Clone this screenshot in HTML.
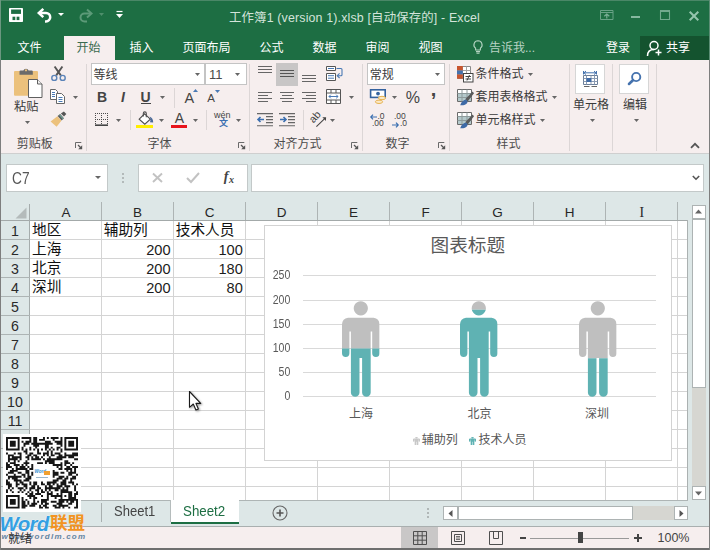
<!DOCTYPE html>
<html lang="zh-CN"><head><meta charset="utf-8"><title>Excel</title>
<style>
html,body{margin:0;padding:0;background:#fff;font-family:"Liberation Sans","Noto Sans CJK SC",sans-serif;}
body{width:710px;height:550px;overflow:hidden;position:relative;font-family:"Liberation Sans","Noto Sans CJK SC",sans-serif;}
#app{position:absolute;left:0;top:0;width:710px;height:550px;overflow:hidden;background:#dde7e7;}
.a{position:absolute;display:block;overflow:visible;}
.t{position:absolute;white-space:nowrap;font-family:"Liberation Sans","Noto Sans CJK SC",sans-serif;}
</style></head>
<body>
<div id="app">
<div class="a" style="left:0px;top:0px;width:710px;height:60px;background:#1d6e43;"></div>
<div class="a" style="left:0px;top:0px;width:710px;height:1px;background:#4a8767;"></div>
<svg class="a" viewBox="0 0 14 14" style="left:9px;top:8px;width:14px;height:14px;"><rect x="0" y="0" width="14" height="14" rx="0.8" fill="#fff"/><rect x="2.1" y="1.5" width="9.9" height="4.4" fill="#1d6e43"/><rect x="3.5" y="8.7" width="2.8" height="3.4" fill="#1d6e43"/><rect x="7.6" y="8.7" width="2.8" height="3.4" fill="#1d6e43"/></svg>
<svg class="a" viewBox="0 0 15 15" style="left:37px;top:8px;width:15px;height:15px;"><path d="M2.5 5H9A4.2 4.2 0 0 1 9 13.4H8" fill="none" stroke="#fff" stroke-width="2.5"/><path d="M6.3 0.8L1.8 5L6.3 9.2" fill="none" stroke="#fff" stroke-width="2.5"/></svg>
<svg class="a" viewBox="0 0 6 3" style="left:57.7px;top:13px;width:6px;height:3px;"><path d="M0 0H6 L3 3Z" fill="#fff"/></svg>
<svg class="a" viewBox="0 0 15 15" style="left:78px;top:8px;width:15px;height:15px;"><path d="M13 5.5H6.5A4 4 0 0 0 6.5 13.5H9" fill="none" stroke="#5c9a78" stroke-width="2"/><path d="M9 1.5L13.5 5.5L9 9.5" fill="none" stroke="#5c9a78" stroke-width="2"/></svg>
<svg class="a" viewBox="0 0 5 3" style="left:98.5px;top:13px;width:5px;height:3px;"><path d="M0 0H5 L2.5 3Z" fill="#4f8f6c"/></svg>
<svg class="a" viewBox="0 0 7 8" style="left:116px;top:11px;width:7px;height:8px;"><path d="M0.5 0.5H6.5" stroke="#fff" stroke-width="1.2"/><path d="M0 3H7L3.5 7Z" fill="#fff"/></svg>
<div class="t" style="left:229px;top:11.5px;font-size:12.4px;line-height:12.4px;color:#d3e4da;letter-spacing:0.16px;">工作簿1 (version 1).xlsb [自动保存的] - Excel</div>
<svg class="a" viewBox="0 0 14 10" style="left:600px;top:10px;width:14px;height:10px;"><path d="M0.5 0.5H13V9.5H0.5Z M0.5 2.5H13" fill="none" stroke="#69a287" stroke-width="1"/><path d="M6.8 4V8.5M4.3 6.3L6.8 4L9.3 6.3" fill="none" stroke="#7aae95" stroke-width="1.2"/></svg>
<div class="a" style="left:631px;top:16px;width:9.3px;height:2px;background:#86b89f;"></div>
<svg class="a" viewBox="0 0 10 10" style="left:660px;top:10px;width:10px;height:10px;"><path d="M0.5 1H9.5V9.5H0.5Z" fill="none" stroke="#72aa8e" stroke-width="1.1"/><path d="M0 1H10" stroke="#72aa8e" stroke-width="2"/></svg>
<svg class="a" viewBox="0 0 10 10" style="left:689px;top:11px;width:10px;height:10px;"><path d="M0.7 0.7L9.3 9.3M9.3 0.7L0.7 9.3" stroke="#95c4ad" stroke-width="2"/></svg>
<div class="a" style="left:64px;top:36px;width:51px;height:25px;background:#f6eeee;"></div>
<div class="t" style="left:17.5px;top:41.5px;font-size:12px;line-height:12px;color:#fff;">文件</div>
<div class="t" style="left:76.5px;top:41.5px;font-size:12px;line-height:12px;color:#3a6a50;">开始</div>
<div class="t" style="left:129.5px;top:41.5px;font-size:12px;line-height:12px;color:#fff;">插入</div>
<div class="t" style="left:182.5px;top:41.5px;font-size:12px;line-height:12px;color:#fff;">页面布局</div>
<div class="t" style="left:259.5px;top:41.5px;font-size:12px;line-height:12px;color:#fff;">公式</div>
<div class="t" style="left:312.5px;top:41.5px;font-size:12px;line-height:12px;color:#fff;">数据</div>
<div class="t" style="left:365.5px;top:41.5px;font-size:12px;line-height:12px;color:#fff;">审阅</div>
<div class="t" style="left:418.5px;top:41.5px;font-size:12px;line-height:12px;color:#fff;">视图</div>
<svg class="a" viewBox="0 0 10 14" style="left:472.5px;top:40px;width:10px;height:14px;"><path d="M5 0.8A4.1 4.1 0 0 0 2.6 8.2V10H7.4V8.2A4.1 4.1 0 0 0 5 0.8Z M3 11.6H7 M3.5 13.2H6.5" fill="none" stroke="#b4d4c2" stroke-width="1.1"/></svg>
<div class="t" style="left:489px;top:41.5px;font-size:12px;line-height:12px;color:#b7d3c3;">告诉我...</div>
<div class="t" style="left:606px;top:41.5px;font-size:12px;line-height:12px;color:#fff;">登录</div>
<div class="a" style="left:640px;top:36px;width:69px;height:24px;background:#14532f;"></div>
<svg class="a" viewBox="0 0 17 17" style="left:646px;top:40px;width:17px;height:17px;"><circle cx="8" cy="5.5" r="4" fill="none" stroke="#fff" stroke-width="1.5"/><path d="M1.5 16C1.5 11 5 9.6 8 9.6" fill="none" stroke="#fff" stroke-width="1.5"/><path d="M12.5 9.5V15.5M9.5 12.5H15.5" stroke="#fff" stroke-width="1.5"/></svg>
<div class="t" style="left:666px;top:41.5px;font-size:12px;line-height:12px;color:#fff;">共享</div>
<div class="a" style="left:1px;top:60px;width:708px;height:93px;background:#f6eeee;"></div>
<div class="a" style="left:0px;top:153px;width:710px;height:1px;background:#cfcfcf;"></div>
<div class="a" style="left:86px;top:64px;width:1px;height:87px;background:#dcd6d6;"></div>
<div class="a" style="left:249px;top:64px;width:1px;height:87px;background:#dcd6d6;"></div>
<div class="a" style="left:361.5px;top:64px;width:1px;height:87px;background:#dcd6d6;"></div>
<div class="a" style="left:449px;top:64px;width:1px;height:87px;background:#dcd6d6;"></div>
<div class="a" style="left:569px;top:64px;width:1px;height:87px;background:#dcd6d6;"></div>
<div class="a" style="left:612px;top:64px;width:1px;height:87px;background:#dcd6d6;"></div>
<div class="a" style="left:656px;top:64px;width:1px;height:87px;background:#dcd6d6;"></div>
<div class="t" style="left:16.7px;top:137.5px;font-size:12px;line-height:12px;color:#4c4c4c;">剪贴板</div>
<div class="t" style="left:147.6px;top:137.5px;font-size:12px;line-height:12px;color:#4c4c4c;">字体</div>
<div class="t" style="left:273.6px;top:137.5px;font-size:12px;line-height:12px;color:#4c4c4c;">对齐方式</div>
<div class="t" style="left:385.6px;top:137.5px;font-size:12px;line-height:12px;color:#4c4c4c;">数字</div>
<div class="t" style="left:496.6px;top:137.5px;font-size:12px;line-height:12px;color:#4c4c4c;">样式</div>
<svg class="a" viewBox="0 0 8 8" style="left:74.7px;top:142px;width:8px;height:8px;"><path d="M0.5 6V0.5H6.3" fill="none" stroke="#6a6a6a" stroke-width="1"/><path d="M3 3L6 6" fill="none" stroke="#555" stroke-width="1.2"/><path d="M7.2 3.2V7.2H3.2Z" fill="#555"/></svg>
<svg class="a" viewBox="0 0 8 8" style="left:237.7px;top:142px;width:8px;height:8px;"><path d="M0.5 6V0.5H6.3" fill="none" stroke="#6a6a6a" stroke-width="1"/><path d="M3 3L6 6" fill="none" stroke="#555" stroke-width="1.2"/><path d="M7.2 3.2V7.2H3.2Z" fill="#555"/></svg>
<svg class="a" viewBox="0 0 8 8" style="left:350.7px;top:142px;width:8px;height:8px;"><path d="M0.5 6V0.5H6.3" fill="none" stroke="#6a6a6a" stroke-width="1"/><path d="M3 3L6 6" fill="none" stroke="#555" stroke-width="1.2"/><path d="M7.2 3.2V7.2H3.2Z" fill="#555"/></svg>
<svg class="a" viewBox="0 0 8 8" style="left:437.7px;top:142px;width:8px;height:8px;"><path d="M0.5 6V0.5H6.3" fill="none" stroke="#6a6a6a" stroke-width="1"/><path d="M3 3L6 6" fill="none" stroke="#555" stroke-width="1.2"/><path d="M7.2 3.2V7.2H3.2Z" fill="#555"/></svg>
<svg class="a" viewBox="0 0 29 31" style="left:14px;top:67px;width:29px;height:31px;"><rect x="0" y="4" width="24" height="24.8" rx="1" fill="#ecc17c"/><path d="M5.5 7.8V4.6A1 1 0 0 1 6.5 3.6H9.4A2.7 2.7 0 0 1 14.6 3.6H17.8A1 1 0 0 1 18.8 4.6V7.8Z" fill="#6a6a6a"/><circle cx="12" cy="3.3" r="1.1" fill="#ecc17c"/><path d="M14.5 12.5H23.5L28 17V30.5H14.5Z" fill="#fff" stroke="#5f5f5f" stroke-width="1"/><path d="M23.5 12.5V17H28" fill="#f1f1f1" stroke="#5f5f5f" stroke-width="1"/></svg>
<div class="t" style="left:14px;top:100.5px;font-size:12.2px;line-height:12.2px;color:#3a3a3a;">粘贴</div>
<svg class="a" viewBox="0 0 5 3" style="left:25px;top:121px;width:5px;height:3px;"><path d="M0 0H5 L2.5 3Z" fill="#666"/></svg>
<svg class="a" viewBox="0 0 17 17" style="left:50px;top:65px;width:17px;height:17px;"><path d="M4.6 1.5L10.8 10.4M12.4 1.5L6.2 10.4" stroke="#555" stroke-width="1.9" fill="none"/><circle cx="4.3" cy="12.9" r="2.5" fill="none" stroke="#5a83b8" stroke-width="1.4"/><circle cx="12.7" cy="12.9" r="2.5" fill="none" stroke="#5a83b8" stroke-width="1.4"/></svg>
<svg class="a" viewBox="0 0 17 17" style="left:49px;top:88px;width:17px;height:17px;"><path d="M1.5 1.5H6.5L8.5 3.5V11.5H1.5Z" fill="#fff" stroke="#666" stroke-width="1"/><path d="M7.5 5.5H12.5L15.5 8.5V15.5H7.5Z" fill="#fff" stroke="#666" stroke-width="1"/><path d="M3 4.5H6M3 6.5H6M3 8.5H6M9.5 9.5H13.5M9.5 11.5H13.5M9.5 13.5H13.5" stroke="#4a7ab5" stroke-width="1"/></svg>
<svg class="a" viewBox="0 0 5 3" style="left:73px;top:96px;width:5px;height:3px;"><path d="M0 0H5 L2.5 3Z" fill="#666"/></svg>
<svg class="a" viewBox="0 0 17 17" style="left:50px;top:111px;width:17px;height:17px;"><path d="M0.6 10.4L7.4 5.2L11.4 9.8L6.6 15.8Z" fill="#ecc17c"/><path d="M7.6 4.9L10.2 2.9L14 7.2L11.6 9.5Z" fill="#5c5c5c"/><path d="M9 3.9L9.9 3.2L13.7 7.5L12.9 8.3Z" fill="#6fa79b"/><path d="M10.9 2.4L13.9 0.4L16.3 2.9L14 5.6Z" fill="#555"/></svg>
<div class="a" style="left:91px;top:63.4px;width:113.5px;height:22px;background:#fff;border:1px solid #c4c4c4;box-sizing:border-box;"></div>
<div class="a" style="left:205px;top:63.4px;width:41.5px;height:22px;background:#fff;border:1px solid #c4c4c4;box-sizing:border-box;"></div>
<div class="t" style="left:93.4px;top:68.8px;font-size:12px;line-height:12px;color:#3a3a3a;">等线</div>
<svg class="a" viewBox="0 0 5 3" style="left:195px;top:73px;width:5px;height:3px;"><path d="M0 0H5 L2.5 3Z" fill="#666"/></svg>
<div class="t" style="left:209px;top:68.3px;font-size:13px;line-height:13px;color:#4a4a4a;">11</div>
<svg class="a" viewBox="0 0 5 3" style="left:234.5px;top:73px;width:5px;height:3px;"><path d="M0 0H5 L2.5 3Z" fill="#666"/></svg>
<div class="t" style="left:97px;top:90px;font-size:14px;line-height:14px;color:#444;font-weight:bold;">B</div>
<div class="t" style="left:121px;top:90px;font-size:14px;line-height:14px;color:#444;font-weight:bold;font-style:italic;">I</div>
<div class="t" style="left:140.5px;top:90px;font-size:14px;line-height:14px;color:#444;font-weight:bold;">U</div>
<div class="a" style="left:140.5px;top:103px;width:10px;height:1.3px;background:#444;"></div>
<svg class="a" viewBox="0 0 5 3" style="left:160px;top:96px;width:5px;height:3px;"><path d="M0 0H5 L2.5 3Z" fill="#666"/></svg>
<div class="a" style="left:173.5px;top:88px;width:1px;height:20px;background:#dcd6d6;"></div>
<div class="t" style="left:184.5px;top:90.5px;font-size:14.5px;line-height:14.5px;color:#444;">A</div>
<svg class="a" viewBox="0 0 5 3" style="left:192.5px;top:89px;width:5px;height:3px;"><path d="M0 3H5L2.5 0Z" fill="#4a7ab5"/></svg>
<div class="t" style="left:207.3px;top:93.2px;font-size:11.5px;line-height:11.5px;color:#444;">A</div>
<svg class="a" viewBox="0 0 5 3" style="left:215px;top:90px;width:5px;height:3px;"><path d="M0 0H5L2.5 3Z" fill="#4a7ab5"/></svg>
<svg class="a" viewBox="0 0 13 13" style="left:95px;top:113px;width:13px;height:13px;"><path d="M0 0.5H13M0 6.5H13M0.5 0V11M6.5 0V11M12.5 0V11" fill="none" stroke="#4a4a4a" stroke-width="1" stroke-dasharray="1 1"/><path d="M0 12.2H13" stroke="#444" stroke-width="1.6"/></svg>
<svg class="a" viewBox="0 0 5 3" style="left:116px;top:119px;width:5px;height:3px;"><path d="M0 0H5 L2.5 3Z" fill="#666"/></svg>
<div class="a" style="left:130px;top:110px;width:1px;height:20px;background:#dcd6d6;"></div>
<svg class="a" viewBox="0 0 17 14" style="left:137px;top:111px;width:17px;height:14px;"><path d="M2.2 8.2L7.6 2.8L13.3 8.2L7.8 13.2Z" fill="#fff" stroke="#4f4f4f" stroke-width="1.1"/><path d="M6.3 5.5V2.4A1.5 1.5 0 0 1 9.3 2.4V6.2" fill="none" stroke="#4f4f4f" stroke-width="1.1"/><path d="M12.6 5.6C15 6.6 16.3 8.8 16.2 11.4L13 11.3C13.8 9.6 13.6 7.6 12.6 5.6Z" fill="#4a6a9a"/></svg>
<div class="a" style="left:136px;top:124.5px;width:17px;height:3.5px;background:#ffee00;"></div>
<svg class="a" viewBox="0 0 5 3" style="left:158.5px;top:119px;width:5px;height:3px;"><path d="M0 0H5 L2.5 3Z" fill="#666"/></svg>
<div class="t" style="left:174.7px;top:111.3px;font-size:14px;line-height:14px;color:#444;">A</div>
<div class="a" style="left:171px;top:124.5px;width:16px;height:3.5px;background:#e8141c;"></div>
<svg class="a" viewBox="0 0 5 3" style="left:192.5px;top:119px;width:5px;height:3px;"><path d="M0 0H5 L2.5 3Z" fill="#666"/></svg>
<div class="a" style="left:206px;top:110px;width:1px;height:20px;background:#dcd6d6;"></div>
<div class="t" style="left:214px;top:110.5px;font-size:9px;line-height:9px;color:#444;">wén</div>
<div class="t" style="left:219px;top:119px;font-size:9px;line-height:9px;color:#3b6fb0;font-weight:bold;">文</div>
<svg class="a" viewBox="0 0 5 3" style="left:236px;top:119px;width:5px;height:3px;"><path d="M0 0H5 L2.5 3Z" fill="#666"/></svg>
<svg class="a" viewBox="0 0 16 16" style="left:258px;top:66px;width:16px;height:16px;"><path d="M0 0.5H14M0 3.5H14M0 6.5H14" stroke="#666" stroke-width="1"/></svg>
<div class="a" style="left:276px;top:63px;width:22px;height:22.5px;background:#c8c6c6;"></div>
<svg class="a" viewBox="0 0 16 16" style="left:280px;top:70px;width:16px;height:16px;"><path d="M0 0.5H14M0 3.5H14M0 6.5H14" stroke="#555" stroke-width="1"/></svg>
<svg class="a" viewBox="0 0 16 16" style="left:302px;top:75px;width:16px;height:16px;"><path d="M0 0.5H14M0 3.5H14M0 6.5H14" stroke="#666" stroke-width="1"/></svg>
<svg class="a" viewBox="0 0 18 17" style="left:326px;top:65px;width:18px;height:17px;"><path d="M0.5 1.5H9.5V5.5H0.5Z M0.5 8.5H9.5V15.5H0.5Z" fill="#fff" stroke="#555" stroke-width="1"/><path d="M2 3.5H8M2 10.7H8M2 13.2H8" stroke="#4a7ab5" stroke-width="1"/><path d="M10.5 3.5H15A1 1 0 0 1 16 4.5V9.7A1 1 0 0 1 15 10.7H11.5" fill="none" stroke="#4a7ab5" stroke-width="1.1"/><path d="M13.6 8.4L11.2 10.7L13.6 13" fill="none" stroke="#4a7ab5" stroke-width="1.1"/></svg>
<svg class="a" viewBox="0 0 16 16" style="left:258px;top:92px;width:16px;height:16px;"><path d="M0 0.5H14M0 3.5H10M0 6.5H14M0 9.5H10" stroke="#666" stroke-width="1"/></svg>
<svg class="a" viewBox="0 0 16 16" style="left:280px;top:92px;width:16px;height:16px;"><path d="M0 0.5H14M2 3.5H12M0 6.5H14M2 9.5H12" stroke="#666" stroke-width="1"/></svg>
<svg class="a" viewBox="0 0 16 16" style="left:302px;top:92px;width:16px;height:16px;"><path d="M0 0.5H14M4 3.5H14M0 6.5H14M4 9.5H14" stroke="#666" stroke-width="1"/></svg>
<svg class="a" viewBox="0 0 16 16" style="left:326px;top:89px;width:16px;height:16px;"><path d="M0.5 0.5H14.5V14.5H0.5Z" fill="#fff" stroke="#555" stroke-width="1"/><path d="M0.5 4H14.5M0.5 11H14.5M5 0.5V4M10 0.5V4M5 11V14.5M10 11V14.5" stroke="#555" stroke-width="1" fill="none"/><path d="M3 7.5H12M4.8 5.7L3 7.5L4.8 9.3M10.2 5.7L12 7.5L10.2 9.3" stroke="#4a7ab5" stroke-width="1" fill="none"/></svg>
<svg class="a" viewBox="0 0 5 3" style="left:348.5px;top:96px;width:5px;height:3px;"><path d="M0 0H5 L2.5 3Z" fill="#666"/></svg>
<svg class="a" viewBox="0 0 17 14" style="left:257px;top:113px;width:17px;height:14px;"><path d="M0 0.6H16M9 3.6H16M9 6.6H16M9 9.6H16M0 12.8H16" stroke="#666" stroke-width="1.1"/><path d="M1 6.5H7M3.5 4L1 6.5L3.5 9" stroke="#3b6fb0" stroke-width="1.6" fill="none"/></svg>
<svg class="a" viewBox="0 0 17 14" style="left:279px;top:113px;width:17px;height:14px;"><path d="M0 0.6H16M9 3.6H16M9 6.6H16M9 9.6H16M0 12.8H16" stroke="#666" stroke-width="1.1"/><path d="M1 6.5H7M4.5 4L7 6.5L4.5 9" stroke="#3b6fb0" stroke-width="1.6" fill="none"/></svg>
<div class="a" style="left:302.5px;top:110px;width:1px;height:20px;background:#dcd6d6;"></div>
<svg class="a" viewBox="0 0 18 18" style="left:309px;top:111px;width:18px;height:18px;"><text transform="translate(4.6,12.6) rotate(-48)" font-family="'Liberation Sans',sans-serif" font-size="10.5" fill="#3f3f3f">ab</text><path d="M7.4 15.6L16.2 7.2" stroke="#444" stroke-width="1.1" fill="none"/><path d="M13.4 6.3L17.1 6.2L16.9 9.9Z" fill="#444"/></svg>
<svg class="a" viewBox="0 0 5 3" style="left:330px;top:119px;width:5px;height:3px;"><path d="M0 0H5 L2.5 3Z" fill="#666"/></svg>
<div class="a" style="left:367px;top:63.4px;width:78.3px;height:22px;background:#fff;border:1px solid #c4c4c4;box-sizing:border-box;"></div>
<div class="t" style="left:369.7px;top:68.6px;font-size:12px;line-height:12px;color:#3a3a3a;">常规</div>
<svg class="a" viewBox="0 0 5 3" style="left:434.5px;top:73px;width:5px;height:3px;"><path d="M0 0H5 L2.5 3Z" fill="#666"/></svg>
<svg class="a" viewBox="0 0 18 17" style="left:369px;top:88px;width:18px;height:17px;"><rect x="1.6" y="1.8" width="14.6" height="7.6" fill="#fff" stroke="#33629f" stroke-width="1.6"/><circle cx="9" cy="5.6" r="1.9" fill="#33629f"/><ellipse cx="13" cy="10" rx="3.6" ry="1.7" fill="#fbe9c6" stroke="#e7b352" stroke-width="1"/><ellipse cx="10" cy="13.8" rx="3.6" ry="1.7" fill="#fbe9c6" stroke="#e7b352" stroke-width="1"/></svg>
<svg class="a" viewBox="0 0 5 3" style="left:392px;top:96px;width:5px;height:3px;"><path d="M0 0H5 L2.5 3Z" fill="#666"/></svg>
<div class="t" style="left:405.8px;top:89.8px;font-size:16px;line-height:16px;color:#444;">%</div>
<div class="t" style="left:430.8px;top:79.3px;font-size:20px;line-height:20px;color:#444;font-weight:bold;">,</div>
<div class="t" style="left:377.5px;top:111.5px;font-size:8.5px;line-height:8.5px;color:#444;">.0</div>
<div class="t" style="left:372px;top:119px;font-size:8.5px;line-height:8.5px;color:#444;">.00</div>
<svg class="a" viewBox="0 0 7 6" style="left:370px;top:114px;width:7px;height:6px;"><path d="M0.8 3H7M3 0.7L0.8 3L3 5.3" stroke="#3b6fb0" stroke-width="1.2" fill="none"/></svg>
<div class="t" style="left:394px;top:111.5px;font-size:8.5px;line-height:8.5px;color:#444;">.00</div>
<div class="t" style="left:400px;top:119px;font-size:8.5px;line-height:8.5px;color:#444;">.0</div>
<svg class="a" viewBox="0 0 7 6" style="left:392px;top:121.5px;width:7px;height:6px;"><path d="M0 3H6.2M4 0.7L6.2 3L4 5.3" stroke="#3b6fb0" stroke-width="1.2" fill="none"/></svg>
<svg class="a" viewBox="0 0 17 17" style="left:457px;top:66px;width:17px;height:17px;"><path d="M0.5 0.5H13.5V12.5H0.5Z" fill="#fff" stroke="#8a8a8a" stroke-width="1"/><path d="M0.5 4.5H13.5M0.5 8.5H13.5M5.5 0.5V12.5M9.5 0.5V12.5" stroke="#a5a5a5" stroke-width="1"/><rect x="0" y="0" width="5.8" height="4.5" fill="#c8552e"/><rect x="0" y="4.5" width="5.8" height="4" fill="#4472ae"/><rect x="0" y="8.5" width="5.8" height="4.2" fill="#c8552e"/><rect x="6.5" y="7.5" width="9.5" height="8.5" fill="#fff" stroke="#444" stroke-width="1"/><path d="M8.5 10.5H14M8.5 13H14M12.5 9L10 14.5" stroke="#444" stroke-width="1"/></svg>
<svg class="a" viewBox="0 0 17 17" style="left:457px;top:89px;width:17px;height:17px;"><path d="M0.5 0.5H14.5V12.5H0.5Z" fill="#fff" stroke="#6a6a6a" stroke-width="1"/><rect x="1" y="4.5" width="13" height="7.5" fill="#b4c9cb"/><path d="M0.5 4.5H14.5M0.5 8.5H14.5M5 0.5V12.5M10 0.5V12.5" stroke="#8d9a9b" stroke-width="1"/><path d="M8.2 10.3L15.6 2.6L17 4.2L10.6 12.6Z" fill="#5a5a5a"/><path d="M3.2 16.2C4.4 12.6 7 10.6 9.6 10.9C11.6 12.6 10.4 16.6 3.2 16.2Z" fill="#3e6aa6"/></svg>
<svg class="a" viewBox="0 0 17 17" style="left:457px;top:112px;width:17px;height:17px;"><path d="M0.5 0.5H14.5V12.5H0.5Z" fill="#fff" stroke="#6a6a6a" stroke-width="1"/><rect x="1" y="4.5" width="13" height="7.5" fill="#b4c9cb"/><path d="M0.5 4.5H14.5M0.5 8.5H14.5M5 0.5V12.5M10 0.5V12.5" stroke="#8d9a9b" stroke-width="1"/><path d="M8.2 10.3L15.6 2.6L17 4.2L10.6 12.6Z" fill="#5a5a5a"/><path d="M3.2 16.2C4.4 12.6 7 10.6 9.6 10.9C11.6 12.6 10.4 16.6 3.2 16.2Z" fill="#3e6aa6"/></svg>
<div class="t" style="left:475.5px;top:68px;font-size:12px;line-height:12px;color:#3a3a3a;">条件格式</div>
<svg class="a" viewBox="0 0 5 3" style="left:528px;top:73px;width:5px;height:3px;"><path d="M0 0H5 L2.5 3Z" fill="#666"/></svg>
<div class="t" style="left:475.5px;top:91px;font-size:12px;line-height:12px;color:#3a3a3a;">套用表格格式</div>
<svg class="a" viewBox="0 0 5 3" style="left:552px;top:96px;width:5px;height:3px;"><path d="M0 0H5 L2.5 3Z" fill="#666"/></svg>
<div class="t" style="left:475.5px;top:114px;font-size:12px;line-height:12px;color:#3a3a3a;">单元格样式</div>
<svg class="a" viewBox="0 0 5 3" style="left:540px;top:119px;width:5px;height:3px;"><path d="M0 0H5 L2.5 3Z" fill="#666"/></svg>
<div class="a" style="left:575px;top:64px;width:30px;height:30px;background:#fff;border:1px solid #d6d6d6;box-sizing:border-box;"></div>
<svg class="a" viewBox="0 0 17 18" style="left:582px;top:70px;width:17px;height:18px;"><path d="M1.5 1V4.5M14.5 1V4.5M2 2.8H14M4 1L2 2.8L4 4.6M12 1L14 2.8L12 4.6" stroke="#4472ae" stroke-width="1" fill="none"/><path d="M1.5 5.5H15.5V14.5H1.5Z" fill="#fff" stroke="#6b7f99" stroke-width="1"/><path d="M1.5 8.5H15.5M1.5 11.5H15.5M4.5 5.5V14.5M9 5.5V14.5M12.5 5.5V14.5" fill="none" stroke="#8a9bb3" stroke-width="1"/><rect x="4.5" y="8" width="4.8" height="4" fill="#3e6aa6"/><path d="M2 16.5H7.5M9.5 16.5H15" stroke="#666" stroke-width="1"/></svg>
<div class="t" style="left:573px;top:99px;font-size:12px;line-height:12px;color:#3a3a3a;">单元格</div>
<svg class="a" viewBox="0 0 5 3" style="left:589.9px;top:119px;width:5px;height:3px;"><path d="M0 0H5 L2.5 3Z" fill="#666"/></svg>
<div class="a" style="left:619px;top:64px;width:30px;height:30px;background:#fff;border:1px solid #d6d6d6;box-sizing:border-box;"></div>
<svg class="a" viewBox="0 0 16 16" style="left:626px;top:70px;width:16px;height:16px;"><circle cx="10.2" cy="7" r="4.1" fill="none" stroke="#4472ae" stroke-width="1.9"/><path d="M6.9 10.3L3 13.9" stroke="#4472ae" stroke-width="2.7" stroke-linecap="round"/></svg>
<div class="t" style="left:623px;top:99px;font-size:12px;line-height:12px;color:#3a3a3a;">编辑</div>
<svg class="a" viewBox="0 0 5 3" style="left:634px;top:119px;width:5px;height:3px;"><path d="M0 0H5 L2.5 3Z" fill="#666"/></svg>
<svg class="a" viewBox="0 0 10 7" style="left:689.5px;top:141.5px;width:10px;height:7px;"><path d="M1 5.8L5 1.8L9 5.8" fill="none" stroke="#555" stroke-width="1.8"/></svg>
<div class="a" style="left:1px;top:154px;width:708px;height:346px;background:#dde7e7;"></div>
<div class="a" style="left:6px;top:164px;width:101.5px;height:27.5px;background:#fff;border:1px solid #c3c9c9;box-sizing:border-box;"></div>
<div class="t" style="left:12.3px;top:170.6px;font-size:15.8px;line-height:15.8px;color:#565656;transform:scaleX(.87);transform-origin:0 0;">C7</div>
<svg class="a" viewBox="0 0 6 3" style="left:95px;top:176px;width:6px;height:3px;"><path d="M0 0H6 L3 3Z" fill="#666"/></svg>
<div class="a" style="left:121.5px;top:173px;width:2px;height:2px;background:#b3baba;"></div>
<div class="a" style="left:121.5px;top:177px;width:2px;height:2px;background:#b3baba;"></div>
<div class="a" style="left:121.5px;top:181px;width:2px;height:2px;background:#b3baba;"></div>
<div class="a" style="left:138px;top:164px;width:109.5px;height:27.5px;background:#fff;border:1px solid #c3c9c9;box-sizing:border-box;"></div>
<svg class="a" viewBox="0 0 11 11" style="left:152px;top:172px;width:11px;height:11px;"><path d="M1 1.5L10 10M10 1.5L1 10" stroke="#c2c2c2" stroke-width="1.9"/></svg>
<svg class="a" viewBox="0 0 14 11" style="left:186px;top:172px;width:14px;height:11px;"><path d="M1 6L5 10L13 1" stroke="#c2c2c2" stroke-width="2" fill="none"/></svg>
<div class="t" style="left:223.8px;top:170px;font-size:14px;line-height:14px;color:#444;font-weight:bold;font-style:italic;font-family:'Liberation Serif',serif;">f</div>
<div class="t" style="left:229px;top:174.5px;font-size:10px;line-height:10px;color:#444;font-weight:bold;font-style:italic;font-family:'Liberation Serif',serif;">x</div>
<div class="a" style="left:251px;top:164px;width:453px;height:27.5px;background:#fff;border:1px solid #c3c9c9;box-sizing:border-box;"></div>
<svg class="a" viewBox="0 0 8 6" style="left:692px;top:174.5px;width:8px;height:6px;"><path d="M0.8 1L4 4.2L7.2 1" fill="none" stroke="#555" stroke-width="1.6"/></svg>
<div class="a" style="left:30px;top:221px;width:658px;height:279px;background:#fff;"></div>
<div class="a" style="left:0px;top:220px;width:688px;height:1px;background:#a3a9a9;"></div>
<div class="a" style="left:29px;top:204px;width:1px;height:296px;background:#a5acac;"></div>
<div class="a" style="left:101px;top:202px;width:1px;height:18px;background:#adb4b4;"></div>
<div class="a" style="left:173px;top:202px;width:1px;height:18px;background:#adb4b4;"></div>
<div class="a" style="left:245px;top:202px;width:1px;height:18px;background:#adb4b4;"></div>
<div class="a" style="left:317px;top:202px;width:1px;height:18px;background:#adb4b4;"></div>
<div class="a" style="left:389px;top:202px;width:1px;height:18px;background:#adb4b4;"></div>
<div class="a" style="left:461px;top:202px;width:1px;height:18px;background:#adb4b4;"></div>
<div class="a" style="left:533px;top:202px;width:1px;height:18px;background:#adb4b4;"></div>
<div class="a" style="left:605px;top:202px;width:1px;height:18px;background:#adb4b4;"></div>
<div class="a" style="left:677px;top:202px;width:1px;height:18px;background:#adb4b4;"></div>
<svg class="a" viewBox="0 0 12 12" style="left:15px;top:207px;width:12px;height:12px;"><path d="M11.5 0.5V11.5H0.5Z" fill="#b4bbbb"/></svg>
<div class="t" style="left:66px;top:206px;width:40px;margin-left:-20px;text-align:center;font-size:13.5px;line-height:14px;color:#262626;">A</div>
<div class="t" style="left:137.5px;top:206px;width:40px;margin-left:-20px;text-align:center;font-size:13.5px;line-height:14px;color:#262626;">B</div>
<div class="t" style="left:209.5px;top:206px;width:40px;margin-left:-20px;text-align:center;font-size:13.5px;line-height:14px;color:#262626;">C</div>
<div class="t" style="left:281.5px;top:206px;width:40px;margin-left:-20px;text-align:center;font-size:13.5px;line-height:14px;color:#262626;">D</div>
<div class="t" style="left:353.5px;top:206px;width:40px;margin-left:-20px;text-align:center;font-size:13.5px;line-height:14px;color:#262626;">E</div>
<div class="t" style="left:425.5px;top:206px;width:40px;margin-left:-20px;text-align:center;font-size:13.5px;line-height:14px;color:#262626;">F</div>
<div class="t" style="left:497.5px;top:206px;width:40px;margin-left:-20px;text-align:center;font-size:13.5px;line-height:14px;color:#262626;">G</div>
<div class="t" style="left:569.5px;top:206px;width:40px;margin-left:-20px;text-align:center;font-size:13.5px;line-height:14px;color:#262626;">H</div>
<div class="t" style="left:641.8px;top:206px;width:40px;margin-left:-20px;text-align:center;font-size:13.8px;line-height:14px;color:#262626;font-family:'Liberation Serif',serif;">I</div>
<div class="a" style="left:0px;top:239px;width:30px;height:1px;background:#adb4b4;"></div>
<div class="a" style="left:30px;top:239px;width:658px;height:1px;background:#d4d4d4;"></div>
<div class="a" style="left:0px;top:258px;width:30px;height:1px;background:#adb4b4;"></div>
<div class="a" style="left:30px;top:258px;width:658px;height:1px;background:#d4d4d4;"></div>
<div class="a" style="left:0px;top:277px;width:30px;height:1px;background:#adb4b4;"></div>
<div class="a" style="left:30px;top:277px;width:658px;height:1px;background:#d4d4d4;"></div>
<div class="a" style="left:0px;top:296px;width:30px;height:1px;background:#adb4b4;"></div>
<div class="a" style="left:30px;top:296px;width:658px;height:1px;background:#d4d4d4;"></div>
<div class="a" style="left:0px;top:315px;width:30px;height:1px;background:#adb4b4;"></div>
<div class="a" style="left:30px;top:315px;width:658px;height:1px;background:#d4d4d4;"></div>
<div class="a" style="left:0px;top:334px;width:30px;height:1px;background:#adb4b4;"></div>
<div class="a" style="left:30px;top:334px;width:658px;height:1px;background:#d4d4d4;"></div>
<div class="a" style="left:0px;top:353px;width:30px;height:1px;background:#adb4b4;"></div>
<div class="a" style="left:30px;top:353px;width:658px;height:1px;background:#d4d4d4;"></div>
<div class="a" style="left:0px;top:372px;width:30px;height:1px;background:#adb4b4;"></div>
<div class="a" style="left:30px;top:372px;width:658px;height:1px;background:#d4d4d4;"></div>
<div class="a" style="left:0px;top:391px;width:30px;height:1px;background:#adb4b4;"></div>
<div class="a" style="left:30px;top:391px;width:658px;height:1px;background:#d4d4d4;"></div>
<div class="a" style="left:0px;top:410px;width:30px;height:1px;background:#adb4b4;"></div>
<div class="a" style="left:30px;top:410px;width:658px;height:1px;background:#d4d4d4;"></div>
<div class="a" style="left:0px;top:429px;width:30px;height:1px;background:#adb4b4;"></div>
<div class="a" style="left:30px;top:429px;width:658px;height:1px;background:#d4d4d4;"></div>
<div class="a" style="left:0px;top:448px;width:30px;height:1px;background:#adb4b4;"></div>
<div class="a" style="left:30px;top:448px;width:658px;height:1px;background:#d4d4d4;"></div>
<div class="a" style="left:0px;top:467px;width:30px;height:1px;background:#adb4b4;"></div>
<div class="a" style="left:30px;top:467px;width:658px;height:1px;background:#d4d4d4;"></div>
<div class="a" style="left:0px;top:486px;width:30px;height:1px;background:#adb4b4;"></div>
<div class="a" style="left:30px;top:486px;width:658px;height:1px;background:#d4d4d4;"></div>
<div class="a" style="left:101px;top:221px;width:1px;height:279px;background:#d4d4d4;"></div>
<div class="a" style="left:173px;top:221px;width:1px;height:279px;background:#d4d4d4;"></div>
<div class="a" style="left:245px;top:221px;width:1px;height:279px;background:#d4d4d4;"></div>
<div class="a" style="left:317px;top:221px;width:1px;height:279px;background:#d4d4d4;"></div>
<div class="a" style="left:389px;top:221px;width:1px;height:279px;background:#d4d4d4;"></div>
<div class="a" style="left:461px;top:221px;width:1px;height:279px;background:#d4d4d4;"></div>
<div class="a" style="left:533px;top:221px;width:1px;height:279px;background:#d4d4d4;"></div>
<div class="a" style="left:605px;top:221px;width:1px;height:279px;background:#d4d4d4;"></div>
<div class="a" style="left:677px;top:221px;width:1px;height:279px;background:#d4d4d4;"></div>
<div class="a" style="left:687px;top:220px;width:1px;height:280px;background:#abb1b1;"></div>
<div class="t" style="left:0;top:223.7px;width:30px;text-align:center;font-size:14.2px;line-height:14px;color:#2a2a2a;">1</div>
<div class="t" style="left:0;top:242.7px;width:30px;text-align:center;font-size:14.2px;line-height:14px;color:#2a2a2a;">2</div>
<div class="t" style="left:0;top:261.7px;width:30px;text-align:center;font-size:14.2px;line-height:14px;color:#2a2a2a;">3</div>
<div class="t" style="left:0;top:280.7px;width:30px;text-align:center;font-size:14.2px;line-height:14px;color:#2a2a2a;">4</div>
<div class="t" style="left:0;top:299.7px;width:30px;text-align:center;font-size:14.2px;line-height:14px;color:#2a2a2a;">5</div>
<div class="t" style="left:0;top:318.7px;width:30px;text-align:center;font-size:14.2px;line-height:14px;color:#2a2a2a;">6</div>
<div class="t" style="left:0;top:337.7px;width:30px;text-align:center;font-size:14.2px;line-height:14px;color:#2a2a2a;">7</div>
<div class="t" style="left:0;top:356.7px;width:30px;text-align:center;font-size:14.2px;line-height:14px;color:#2a2a2a;">8</div>
<div class="t" style="left:0;top:375.7px;width:30px;text-align:center;font-size:14.2px;line-height:14px;color:#2a2a2a;">9</div>
<div class="t" style="left:0;top:394.7px;width:30px;text-align:center;font-size:14.2px;line-height:14px;color:#2a2a2a;">10</div>
<div class="t" style="left:0;top:413.7px;width:30px;text-align:center;font-size:14.2px;line-height:14px;color:#2a2a2a;">11</div>
<div class="t" style="left:32px;top:223.3px;font-size:14.67px;line-height:14.67px;color:#111;">地区</div>
<div class="t" style="left:103.8px;top:223.3px;font-size:14.67px;line-height:14.67px;color:#111;">辅助列</div>
<div class="t" style="left:175.8px;top:223.3px;font-size:14.67px;line-height:14.67px;color:#111;">技术人员</div>
<div class="t" style="left:32px;top:242.3px;font-size:14.67px;line-height:14.67px;color:#111;">上海</div>
<div class="t" style="left:32px;top:261.3px;font-size:14.67px;line-height:14.67px;color:#111;">北京</div>
<div class="t" style="left:32px;top:280.3px;font-size:14.67px;line-height:14.67px;color:#111;">深圳</div>
<div class="t" style="left:110.6px;top:243.4px;width:60px;text-align:right;font-size:14.6px;line-height:15px;color:#1c1c1c;">200</div>
<div class="t" style="left:110.6px;top:262.4px;width:60px;text-align:right;font-size:14.6px;line-height:15px;color:#1c1c1c;">200</div>
<div class="t" style="left:110.6px;top:281.4px;width:60px;text-align:right;font-size:14.6px;line-height:15px;color:#1c1c1c;">200</div>
<div class="t" style="left:182.8px;top:243.4px;width:60px;text-align:right;font-size:14.6px;line-height:15px;color:#1c1c1c;">100</div>
<div class="t" style="left:182.8px;top:262.4px;width:60px;text-align:right;font-size:14.6px;line-height:15px;color:#1c1c1c;">180</div>
<div class="t" style="left:182.8px;top:281.4px;width:60px;text-align:right;font-size:14.6px;line-height:15px;color:#1c1c1c;">80</div>
<div class="a" style="left:264px;top:224.5px;width:408px;height:236.5px;background:#fff;border:1px solid #d3d3d3;box-sizing:border-box;"></div>
<div class="t" style="left:430.5px;top:236.8px;font-size:18.67px;line-height:18.67px;color:#595959;">图表标题</div>
<div class="a" style="left:302.5px;top:396px;width:353px;height:1px;background:#d9d9d9;"></div>
<div class="t" style="left:250px;top:390px;width:40.3px;text-align:right;font-size:12px;line-height:12px;color:#595959;transform:scaleX(.88);transform-origin:100% 0;">0</div>
<div class="a" style="left:302.5px;top:372px;width:353px;height:1px;background:#d9d9d9;"></div>
<div class="t" style="left:250px;top:366px;width:40.3px;text-align:right;font-size:12px;line-height:12px;color:#595959;transform:scaleX(.88);transform-origin:100% 0;">50</div>
<div class="a" style="left:302.5px;top:348px;width:353px;height:1px;background:#d9d9d9;"></div>
<div class="t" style="left:250px;top:342px;width:40.3px;text-align:right;font-size:12px;line-height:12px;color:#595959;transform:scaleX(.88);transform-origin:100% 0;">100</div>
<div class="a" style="left:302.5px;top:324px;width:353px;height:1px;background:#d9d9d9;"></div>
<div class="t" style="left:250px;top:318px;width:40.3px;text-align:right;font-size:12px;line-height:12px;color:#595959;transform:scaleX(.88);transform-origin:100% 0;">150</div>
<div class="a" style="left:302.5px;top:300px;width:353px;height:1px;background:#d9d9d9;"></div>
<div class="t" style="left:250px;top:294px;width:40.3px;text-align:right;font-size:12px;line-height:12px;color:#595959;transform:scaleX(.88);transform-origin:100% 0;">200</div>
<div class="a" style="left:302.5px;top:275px;width:353px;height:1px;background:#d9d9d9;"></div>
<div class="t" style="left:250px;top:269px;width:40.3px;text-align:right;font-size:12px;line-height:12px;color:#595959;transform:scaleX(.88);transform-origin:100% 0;">250</div>
<svg width="0" height="0" style="position:absolute"><defs><path id="person" d="M18.8 0.2a7.1 7.1 0 1 0 0.01 0Z M6 16.7H31.6a7 7 0 0 1 6 6.5V52.2a3.7 3.7 0 0 1-7.4 0V30.5h-1.5V91.5a4.3 4.3 0 0 1-8.6 0V57h-2.6V91.5a4.3 4.3 0 0 1-8.6 0V30.5h-1.5V52.2a3.7 3.7 0 0 1-7.4 0V23.2a7 7 0 0 1 6-6.5Z"/></defs></svg>
<svg class="a" viewBox="0 0 37.6 96" style="left:341.9px;top:300.5px;width:37.6px;height:96px;"><clipPath id="c360a"><rect x="0" y="0" width="37.6" height="47.52"/></clipPath><clipPath id="c360b"><rect x="0" y="47.52" width="37.6" height="48.48"/></clipPath><use href="#person" fill="#bfbfbf" clip-path="url(#c360a)"/><use href="#person" fill="#5fb2b3" clip-path="url(#c360b)"/></svg>
<svg class="a" viewBox="0 0 37.6 96" style="left:459.8px;top:300.5px;width:37.6px;height:96px;"><clipPath id="c478a"><rect x="0" y="0" width="37.6" height="8.736"/></clipPath><clipPath id="c478b"><rect x="0" y="8.736" width="37.6" height="87.264"/></clipPath><use href="#person" fill="#bfbfbf" clip-path="url(#c478a)"/><use href="#person" fill="#5fb2b3" clip-path="url(#c478b)"/></svg>
<svg class="a" viewBox="0 0 37.6 96" style="left:578.6px;top:300.5px;width:37.6px;height:96px;"><clipPath id="c597a"><rect x="0" y="0" width="37.6" height="57.216"/></clipPath><clipPath id="c597b"><rect x="0" y="57.216" width="37.6" height="38.784"/></clipPath><use href="#person" fill="#bfbfbf" clip-path="url(#c597a)"/><use href="#person" fill="#5fb2b3" clip-path="url(#c597b)"/></svg>
<div class="t" style="left:349px;top:407.5px;font-size:12px;line-height:12px;color:#595959;">上海</div>
<div class="t" style="left:467.5px;top:407.5px;font-size:12px;line-height:12px;color:#595959;">北京</div>
<div class="t" style="left:585px;top:407.5px;font-size:12px;line-height:12px;color:#595959;">深圳</div>
<svg class="a" viewBox="0 0 37.6 96" preserveAspectRatio="none" style="left:413px;top:436.5px;width:7px;height:8px;"><use href="#person" fill="#c8c8c8"/></svg>
<div class="t" style="left:421.8px;top:434px;font-size:12px;line-height:12px;color:#555;">辅助列</div>
<svg class="a" viewBox="0 0 37.6 96" preserveAspectRatio="none" style="left:469px;top:436.5px;width:7px;height:8px;"><use href="#person" fill="#5fb2b3"/></svg>
<div class="t" style="left:478.6px;top:434px;font-size:12px;line-height:12px;color:#555;">技术人员</div>
<svg class="a" viewBox="0 0 14 22" style="left:188px;top:390px;width:14px;height:22px;filter:drop-shadow(1px 1px 0.8px rgba(0,0,0,.4));"><path d="M1.5 1.5V17.3L5.3 14L7.9 20L10.4 19L7.9 13.4H12.7Z" fill="#fff" stroke="#1a1a1a" stroke-width="1.1" stroke-linejoin="round"/></svg>
<div class="a" style="left:691.5px;top:204.5px;width:14px;height:295px;background:#d6d6d1;"></div>
<div class="a" style="left:691.5px;top:204.5px;width:14px;height:14px;background:#fff;border:1px solid #adb3b3;box-sizing:border-box;"></div>
<svg class="a" viewBox="0 0 7 5" style="left:695px;top:208.5px;width:7px;height:5px;"><path d="M0 4.5H7L3.5 0.5Z" fill="#666"/></svg>
<div class="a" style="left:691.5px;top:219px;width:14px;height:169px;background:#fff;border:1px solid #adb3b3;box-sizing:border-box;"></div>
<div class="a" style="left:691.5px;top:485.5px;width:14px;height:14px;background:#fff;border:1px solid #adb3b3;box-sizing:border-box;"></div>
<svg class="a" viewBox="0 0 7 5" style="left:695px;top:490.5px;width:7px;height:5px;"><path d="M0 0.5H7L3.5 4.5Z" fill="#666"/></svg>
<div class="a" style="left:1px;top:500px;width:708px;height:27px;background:#dde7e7;"></div>
<div class="a" style="left:30px;top:499.5px;width:658px;height:1px;background:#aeb5b5;"></div>
<div class="a" style="left:101px;top:503px;width:1px;height:19px;background:#a8afaf;"></div>
<div class="a" style="left:170px;top:500px;width:1px;height:22px;background:#b5bcbc;"></div>
<div class="t" style="left:114px;top:503.7px;font-size:14.2px;line-height:14.2px;color:#444;transform:scaleX(.918);transform-origin:0 0;">Sheet1</div>
<div class="a" style="left:171px;top:499.5px;width:67.5px;height:22.5px;background:#fff;"></div>
<div class="a" style="left:171px;top:522px;width:67.5px;height:2px;background:#1d6e43;"></div>
<div class="t" style="left:183px;top:503.7px;font-size:14.2px;line-height:14.2px;color:#1d6e43;transform:scaleX(.938);transform-origin:0 0;">Sheet2</div>
<svg class="a" viewBox="0 0 16 16" style="left:272px;top:505px;width:16px;height:16px;"><circle cx="8" cy="8" r="7" fill="none" stroke="#666" stroke-width="1.1"/><path d="M4.5 8H11.5M8 4.5V11.5" stroke="#555" stroke-width="1.6"/></svg>
<div class="a" style="left:426.5px;top:508px;width:2px;height:2px;background:#b0b7b7;"></div>
<div class="a" style="left:426.5px;top:512px;width:2px;height:2px;background:#b0b7b7;"></div>
<div class="a" style="left:426.5px;top:516px;width:2px;height:2px;background:#b0b7b7;"></div>
<div class="a" style="left:443px;top:506px;width:245px;height:14px;background:#d6d6d1;"></div>
<div class="a" style="left:443px;top:506px;width:14.5px;height:14px;background:#fff;border:1px solid #adb3b3;box-sizing:border-box;"></div>
<svg class="a" viewBox="0 0 5 7" style="left:447.5px;top:509.5px;width:5px;height:7px;"><path d="M4.5 0V7L0.5 3.5Z" fill="#555"/></svg>
<div class="a" style="left:457.5px;top:506px;width:175px;height:14px;background:#fff;border:1px solid #adb3b3;box-sizing:border-box;"></div>
<div class="a" style="left:673.5px;top:506px;width:14.5px;height:14px;background:#fff;border:1px solid #adb3b3;box-sizing:border-box;"></div>
<svg class="a" viewBox="0 0 5 7" style="left:678.5px;top:509.5px;width:5px;height:7px;"><path d="M0.5 0V7L4.5 3.5Z" fill="#555"/></svg>
<div class="a" style="left:1px;top:527px;width:708px;height:21px;background:#f6eeee;"></div>
<div class="a" style="left:1px;top:526px;width:708px;height:1px;background:#a9afaf;"></div>
<div class="a" style="left:0px;top:548px;width:710px;height:2px;background:#6e6e6e;"></div>
<div class="a" style="left:401px;top:527px;width:37px;height:21px;background:#c9c7c7;"></div>
<svg class="a" viewBox="0 0 14 14" style="left:413px;top:531px;width:14px;height:14px;"><path d="M0.5 0.5H13.5V13.5H0.5ZM0.5 4.8H13.5M0.5 9.2H13.5M4.8 0.5V13.5M9.2 0.5V13.5" fill="none" stroke="#4f4f4f" stroke-width="1"/></svg>
<svg class="a" viewBox="0 0 14 14" style="left:451px;top:531px;width:14px;height:14px;"><path d="M0.5 0.5H13.5V13.5H0.5Z" fill="none" stroke="#4f4f4f" stroke-width="1"/><path d="M3.5 3.5H10.5V10.5H3.5Z" fill="none" stroke="#4f4f4f" stroke-width="1"/><path d="M5 5.5H9M5 7H9M5 8.5H9" fill="none" stroke="#4f4f4f" stroke-width="0.8"/></svg>
<svg class="a" viewBox="0 0 14 14" style="left:489px;top:531px;width:14px;height:14px;"><path d="M0.5 0.5H13.5V13.5H0.5Z" fill="none" stroke="#4f4f4f" stroke-width="1"/><path d="M4.5 0.5V7.5H9.5V0.5" fill="none" stroke="#4f4f4f" stroke-width="1"/></svg>
<div class="a" style="left:520px;top:537px;width:5.5px;height:2px;background:#444;"></div>
<div class="a" style="left:530px;top:537.5px;width:99px;height:1px;background:#999;"></div>
<div class="a" style="left:578px;top:531.5px;width:4.5px;height:11.5px;background:#444;"></div>
<div class="a" style="left:634px;top:537px;width:8px;height:2px;background:#444;"></div>
<div class="a" style="left:637px;top:534px;width:2px;height:8px;background:#444;"></div>
<div class="t" style="left:657.5px;top:531.5px;font-size:12.5px;line-height:12.5px;color:#444;">100%</div>
<div class="a" style="left:3px;top:433.5px;width:78px;height:78px;background:#fff;"></div>
<svg class="a" viewBox="0 0 37 37" preserveAspectRatio="none" style="left:5.7px;top:437.2px;width:72px;height:71.6px;"><path d="M0 0h7v1h-7zM8 0h5v1h-5zM14 0h2v1h-2zM19 0h1v1h-1zM21 0h1v1h-1zM23 0h4v1h-4zM28 0h1v1h-1zM30 0h7v1h-7zM0 1h1v1h-1zM6 1h1v1h-1zM12 1h1v1h-1zM14 1h2v1h-2zM17 1h3v1h-3zM24 1h1v1h-1zM28 1h1v1h-1zM30 1h1v1h-1zM36 1h1v1h-1zM0 2h1v1h-1zM2 2h3v1h-3zM6 2h1v1h-1zM8 2h1v1h-1zM10 2h3v1h-3zM14 2h2v1h-2zM20 2h3v1h-3zM25 2h4v1h-4zM30 2h1v1h-1zM32 2h3v1h-3zM36 2h1v1h-1zM0 3h1v1h-1zM2 3h3v1h-3zM6 3h1v1h-1zM9 3h3v1h-3zM13 3h11v1h-11zM26 3h3v1h-3zM30 3h1v1h-1zM32 3h3v1h-3zM36 3h1v1h-1zM0 4h1v1h-1zM2 4h3v1h-3zM6 4h1v1h-1zM9 4h1v1h-1zM14 4h3v1h-3zM20 4h2v1h-2zM28 4h1v1h-1zM30 4h1v1h-1zM32 4h3v1h-3zM36 4h1v1h-1zM0 5h1v1h-1zM6 5h1v1h-1zM8 5h1v1h-1zM12 5h1v1h-1zM15 5h1v1h-1zM20 5h2v1h-2zM23 5h1v1h-1zM26 5h2v1h-2zM30 5h1v1h-1zM36 5h1v1h-1zM0 6h7v1h-7zM8 6h1v1h-1zM10 6h1v1h-1zM12 6h1v1h-1zM14 6h1v1h-1zM16 6h1v1h-1zM18 6h1v1h-1zM20 6h1v1h-1zM22 6h1v1h-1zM24 6h1v1h-1zM26 6h1v1h-1zM28 6h1v1h-1zM30 6h7v1h-7zM9 7h2v1h-2zM16 7h1v1h-1zM21 7h1v1h-1zM23 7h1v1h-1zM28 7h1v1h-1zM0 8h1v1h-1zM4 8h1v1h-1zM6 8h2v1h-2zM10 8h1v1h-1zM12 8h2v1h-2zM16 8h2v1h-2zM19 8h3v1h-3zM23 8h1v1h-1zM25 8h3v1h-3zM30 8h1v1h-1zM34 8h3v1h-3zM1 9h3v1h-3zM7 9h1v1h-1zM11 9h2v1h-2zM14 9h2v1h-2zM19 9h1v1h-1zM21 9h1v1h-1zM23 9h2v1h-2zM27 9h2v1h-2zM30 9h7v1h-7zM1 10h1v1h-1zM3 10h5v1h-5zM10 10h2v1h-2zM13 10h1v1h-1zM15 10h2v1h-2zM18 10h1v1h-1zM22 10h1v1h-1zM26 10h5v1h-5zM32 10h3v1h-3zM1 11h5v1h-5zM7 11h1v1h-1zM11 11h1v1h-1zM13 11h5v1h-5zM19 11h1v1h-1zM21 11h8v1h-8zM35 11h2v1h-2zM1 12h1v1h-1zM4 12h1v1h-1zM6 12h1v1h-1zM10 12h1v1h-1zM20 12h5v1h-5zM30 12h2v1h-2zM0 13h1v1h-1zM2 13h3v1h-3zM9 13h3v1h-3zM16 13h3v1h-3zM20 13h1v1h-1zM22 13h3v1h-3zM28 13h1v1h-1zM30 13h3v1h-3zM34 13h1v1h-1zM0 14h2v1h-2zM4 14h3v1h-3zM8 14h1v1h-1zM10 14h1v1h-1zM13 14h1v1h-1zM24 14h5v1h-5zM30 14h1v1h-1zM33 14h1v1h-1zM0 15h3v1h-3zM5 15h1v1h-1zM7 15h3v1h-3zM11 15h1v1h-1zM13 15h1v1h-1zM26 15h1v1h-1zM28 15h1v1h-1zM31 15h2v1h-2zM34 15h3v1h-3zM0 16h1v1h-1zM3 16h1v1h-1zM5 16h6v1h-6zM12 16h2v1h-2zM27 16h2v1h-2zM30 16h4v1h-4zM35 16h1v1h-1zM2 17h4v1h-4zM10 17h2v1h-2zM24 17h1v1h-1zM31 17h1v1h-1zM33 17h1v1h-1zM35 17h1v1h-1zM1 18h3v1h-3zM6 18h2v1h-2zM10 18h2v1h-2zM13 18h1v1h-1zM24 18h3v1h-3zM28 18h2v1h-2zM32 18h4v1h-4zM0 19h1v1h-1zM4 19h1v1h-1zM8 19h2v1h-2zM11 19h1v1h-1zM13 19h1v1h-1zM24 19h3v1h-3zM32 19h2v1h-2zM36 19h1v1h-1zM1 20h7v1h-7zM9 20h1v1h-1zM11 20h2v1h-2zM24 20h1v1h-1zM27 20h3v1h-3zM31 20h1v1h-1zM34 20h2v1h-2zM1 21h1v1h-1zM3 21h3v1h-3zM10 21h3v1h-3zM26 21h3v1h-3zM30 21h2v1h-2zM33 21h3v1h-3zM0 22h1v1h-1zM4 22h4v1h-4zM9 22h3v1h-3zM24 22h3v1h-3zM29 22h2v1h-2zM33 22h1v1h-1zM0 23h2v1h-2zM5 23h1v1h-1zM7 23h2v1h-2zM12 23h1v1h-1zM14 23h2v1h-2zM18 23h1v1h-1zM21 23h5v1h-5zM28 23h3v1h-3zM32 23h3v1h-3zM0 24h3v1h-3zM5 24h2v1h-2zM8 24h3v1h-3zM12 24h1v1h-1zM14 24h2v1h-2zM18 24h2v1h-2zM21 24h2v1h-2zM24 24h1v1h-1zM26 24h1v1h-1zM28 24h3v1h-3zM34 24h1v1h-1zM36 24h1v1h-1zM1 25h2v1h-2zM5 25h1v1h-1zM9 25h2v1h-2zM13 25h2v1h-2zM16 25h1v1h-1zM20 25h1v1h-1zM22 25h2v1h-2zM26 25h3v1h-3zM30 25h3v1h-3zM35 25h1v1h-1zM1 26h1v1h-1zM3 26h1v1h-1zM6 26h3v1h-3zM10 26h1v1h-1zM12 26h3v1h-3zM16 26h2v1h-2zM20 26h8v1h-8zM29 26h1v1h-1zM31 26h1v1h-1zM35 26h1v1h-1zM0 27h1v1h-1zM2 27h1v1h-1zM7 27h1v1h-1zM9 27h1v1h-1zM12 27h1v1h-1zM15 27h2v1h-2zM18 27h1v1h-1zM20 27h1v1h-1zM22 27h1v1h-1zM25 27h2v1h-2zM28 27h4v1h-4zM35 27h1v1h-1zM0 28h1v1h-1zM3 28h1v1h-1zM6 28h1v1h-1zM8 28h1v1h-1zM11 28h1v1h-1zM13 28h1v1h-1zM16 28h1v1h-1zM18 28h2v1h-2zM21 28h1v1h-1zM23 28h1v1h-1zM28 28h6v1h-6zM36 28h1v1h-1zM10 29h1v1h-1zM12 29h2v1h-2zM15 29h3v1h-3zM21 29h3v1h-3zM26 29h1v1h-1zM28 29h1v1h-1zM32 29h2v1h-2zM35 29h2v1h-2zM0 30h7v1h-7zM11 30h4v1h-4zM18 30h1v1h-1zM21 30h1v1h-1zM23 30h6v1h-6zM30 30h1v1h-1zM32 30h2v1h-2zM35 30h1v1h-1zM0 31h1v1h-1zM6 31h1v1h-1zM8 31h1v1h-1zM12 31h1v1h-1zM14 31h2v1h-2zM21 31h1v1h-1zM25 31h1v1h-1zM28 31h1v1h-1zM32 31h4v1h-4zM0 32h1v1h-1zM2 32h3v1h-3zM6 32h1v1h-1zM8 32h1v1h-1zM10 32h1v1h-1zM14 32h1v1h-1zM18 32h4v1h-4zM27 32h10v1h-10zM0 33h1v1h-1zM2 33h3v1h-3zM6 33h1v1h-1zM8 33h2v1h-2zM11 33h1v1h-1zM14 33h1v1h-1zM16 33h1v1h-1zM18 33h3v1h-3zM23 33h3v1h-3zM27 33h3v1h-3zM31 33h1v1h-1zM33 33h2v1h-2zM36 33h1v1h-1zM0 34h1v1h-1zM2 34h3v1h-3zM6 34h1v1h-1zM8 34h2v1h-2zM11 34h1v1h-1zM13 34h3v1h-3zM18 34h1v1h-1zM20 34h2v1h-2zM26 34h3v1h-3zM32 34h2v1h-2zM36 34h1v1h-1zM0 35h1v1h-1zM6 35h1v1h-1zM8 35h3v1h-3zM12 35h3v1h-3zM17 35h1v1h-1zM19 35h2v1h-2zM24 35h2v1h-2zM27 35h5v1h-5zM36 35h1v1h-1zM0 36h7v1h-7zM8 36h2v1h-2zM17 36h2v1h-2zM20 36h2v1h-2zM25 36h3v1h-3zM29 36h1v1h-1zM32 36h1v1h-1zM35 36h2v1h-2z" fill="#161616"/></svg>
<div class="t" style="left:34.5px;top:470px;font-size:4.5px;line-height:4.5px;color:#3a8fd0;font-weight:bold;font-style:italic;">Word</div>
<div class="a" style="left:44px;top:471px;width:6px;height:3.5px;background:#f0a030;"></div>
<div class="a" style="left:36px;top:477px;width:12px;height:1px;background:#9bb7cc;"></div>
<div class="t" style="left:-0.5px;top:513.6px;font-size:20.4px;line-height:20.4px;color:#35a0e2;font-weight:bold;font-style:italic;letter-spacing:-0.7px;text-shadow:0 0 1px #fff,0 0 1px #fff;">Word</div>
<div class="t" style="left:50px;top:514.5px;font-size:17.5px;line-height:17.5px;color:#f29322;font-weight:bold;">联盟</div>
<div class="t" style="left:1.5px;top:533.3px;font-size:8px;line-height:8px;color:#6485a3;font-weight:bold;font-style:italic;letter-spacing:1.22px;">www.wordlm.com</div>
<div class="t" style="left:8px;top:532.5px;font-size:12px;line-height:12px;color:#2e2e2e;">就绪</div>
<div class="a" style="left:0px;top:0px;width:1px;height:60px;background:#6b9780;"></div>
<div class="a" style="left:0px;top:60px;width:1px;height:490px;background:#7e7e7e;"></div>
<div class="a" style="left:709px;top:0px;width:1px;height:60px;background:#5c8e75;"></div>
<div class="a" style="left:709px;top:60px;width:1px;height:490px;background:#7e7e7e;"></div>
</div>
</body></html>
